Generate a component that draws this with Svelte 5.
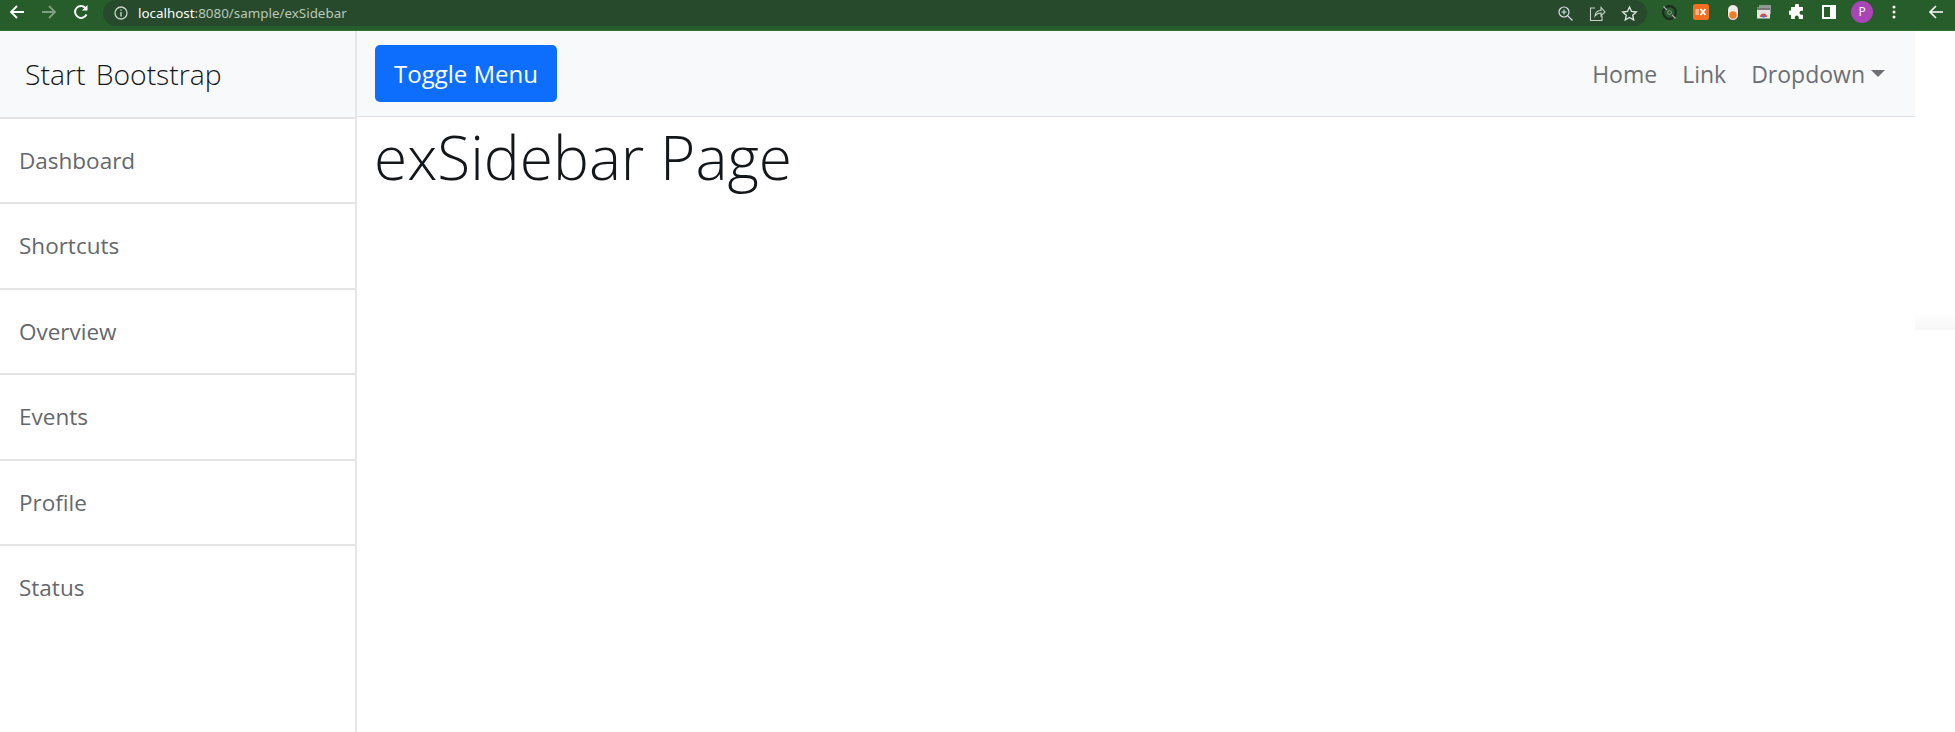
<script>
  const items = ['Dashboard', 'Shortcuts', 'Overview', 'Events', 'Profile', 'Status'];
</script>

<div class="window">
  <header class="chrome">
    <div class="nav-buttons">
      <svg width="18" height="18" viewBox="0 0 18 18" class="ic"><path d="M16 9H3M9 3 3 9l6 6" fill="none" stroke="#fff" stroke-width="1.8"/></svg>
      <svg width="18" height="18" viewBox="0 0 18 18" class="ic"><path d="M2 9h13M9 3l6 6-6 6" fill="none" stroke="#7f9f80" stroke-width="1.8"/></svg>
      <svg width="18" height="18" viewBox="0 0 18 18" class="ic"><path d="M14.5 11.5A6 6 0 1 1 14 5.5" fill="none" stroke="#fff" stroke-width="1.9"/><path d="M15.5 2v5.5H10z" fill="#fff"/></svg>
    </div>
    <div class="omnibox">
      <svg width="16" height="16" viewBox="0 0 16 16"><circle cx="8" cy="8" r="6" fill="none" stroke="#c9d3ca" stroke-width="1.3"/><path d="M8 7v4.500M8 4.500v1.300" stroke="#c9d3ca" stroke-width="1.4"/></svg>
      <span class="url"><span class="host">localhost</span>:8080/sample/exSidebar</span>
      <div class="omni-icons">
        <svg width="17" height="17" viewBox="0 0 17 17"><circle cx="7" cy="7" r="5" fill="none" stroke="#dde" stroke-width="1.200"/><path d="M7 4.500v5M4.500 7h5M10.800 10.800l4.700 4.700" stroke="#dde" stroke-width="1.200" fill="none"/></svg>
        <svg width="17" height="17" viewBox="0 0 17 17"><path d="M6 3H1.500v12.500h11.500V11M6 11c.5-4 3-5.500 6-5.500V2.500l4 4.500-4 4V8c-2.500 0-4.500 1-6 3z" fill="none" stroke="#c9d3ca" stroke-width="1.100"/></svg>
        <svg width="17" height="17" viewBox="0 0 17 17"><path d="M8.500 2l2 4.500 4.800.5-3.600 3.200 1 4.800-4.200-2.500L4.300 15l1-4.800L1.700 7l4.800-.5z" fill="none" stroke="#e4e8e4" stroke-width="1.300"/></svg>
      </div>
    </div>
    <div class="extensions">
      <svg class="e1" width="17" height="17" viewBox="0 0 17 17"><circle cx="8.500" cy="8.500" r="6.300" fill="none" stroke="#1e2a21" stroke-width="2.200"/><circle cx="8.500" cy="8.500" r="1.900" fill="none" stroke="#8d9f90" stroke-width="1"/><path d="M2.500 2.500 6 6M14.500 14.500 11 11" stroke="#a9b6ab" stroke-width="1.100"/></svg>
      <svg class="e2" width="16" height="16" viewBox="0 0 16 16"><rect width="16" height="16" rx="2.500" fill="#f26f21"/><rect x="2.500" y="5" width="3.500" height="6" fill="#f8b48b"/><path d="m7.500 5 5 6m0-6-5 6" stroke="#fff" stroke-width="1.900"/></svg>
      <svg class="e3" width="12" height="17" viewBox="0 0 12 17"><rect x=".5" y=".5" width="11" height="16" rx="5.500" fill="#f0ece8" stroke="#333d34" stroke-width="1"/><circle cx="6" cy="11" r="3.700" fill="#f47b20"/></svg>
      <svg class="e4" width="16" height="16" viewBox="0 0 16 16"><rect x="3" y="1" width="12" height="9" fill="#8a9a8c"/><rect x="1" y="3.500" width="13" height="11" fill="#e4e4e4"/><rect x="1" y="3.500" width="13" height="2.500" fill="#777"/><path d="M4 13a3.300 3.300 0 0 1 7 0z" fill="#dd4b3e"/><circle cx="7.500" cy="12.500" r="1.300" fill="#3b78e7"/></svg>
      <svg class="e5" width="16" height="16" viewBox="0 0 16 16"><path d="M6 1.500a2 2 0 0 1 4 0V3h4v3.700h-1.500a2 2 0 0 0 0 4H14V15H9.800v-1.500a2 2 0 0 0-4 0V15H2v-4h-.5a2.300 2.300 0 0 1 0-4.600H2V3h4z" fill="#fff"/></svg>
      <svg class="e6" width="14" height="14" viewBox="0 0 14 14"><path fill-rule="evenodd" d="M0 0h14v14H0zM2 2v10h6V2z" fill="#fff"/></svg>
      <span class="avatar">P</span>
      <svg class="e7" width="4" height="14" viewBox="0 0 4 14"><circle cx="2" cy="2" r="1.500" fill="#fff"/><circle cx="2" cy="7" r="1.500" fill="#fff"/><circle cx="2" cy="12" r="1.500" fill="#fff"/></svg>
      <svg class="e8" width="16" height="16" viewBox="0 0 16 16"><path d="M15 8H2M8 2 2 8l6 6" fill="none" stroke="#fff" stroke-width="1.600"/></svg>
    </div>
  </header>

  <div class="page">
    <aside class="sidebar">
      <div class="heading">Start Bootstrap</div>
      <div class="list">
        {#each items as item}
          <a class="item" href="#top">{item}</a>
        {/each}
      </div>
    </aside>
    <main class="content">
      <nav class="navbar">
        <button class="toggle">Toggle Menu</button>
        <ul class="links">
          <li>Home</li>
          <li>Link</li>
          <li class="dropdown">Dropdown<span class="caret"></span></li>
        </ul>
      </nav>
      <h1>exSidebar Page</h1>
    </main>
    <div class="strip">
      <div class="shade"></div>
    </div>
  </div>
</div>

<style>
  :global(body) {
    margin: 0;
    background: #fff;
    overflow: hidden;
  }
  .window {
    width: 1955px;
    height: 732px;
    display: flex;
    flex-direction: column;
    font-family: "Open Sans", "Noto Sans", sans-serif;
    overflow: hidden;
  }
  .chrome {
    height: 31px;
    flex: none;
    box-sizing: border-box;
    background: #275d2a;
    border-bottom: 1px solid #2f7434;
    display: flex;
    align-items: flex-start;
    padding-left: 8px;
  }
  .nav-buttons {
    display: flex;
    gap: 14px;
    padding-top: 3px;
    width: 95px;
    flex: none;
  }
  .ic { display: block; }
  .omnibox {
    width: 1544px;
    height: 26px;
    box-sizing: border-box;
    flex: none;
    background: #264a2b;
    border-radius: 13px;
    display: flex;
    align-items: center;
    padding-left: 10px;
    gap: 9px;
    color: #b9c8ba;
    font-size: 13.400px;
    font-family: "Noto Sans", sans-serif;
  }
  .url { white-space: nowrap; }
  .host { color: #fff; }
  .omni-icons {
    margin-left: auto;
    display: flex;
    gap: 15px;
    padding-right: 9px;
  }
  .extensions {
    position: relative;
    flex: 1;
    height: 26px;
  }
  .extensions svg, .avatar { position: absolute; }
  .e1 { left: 14px; top: 4px; }
  .e2 { left: 46px; top: 4px; }
  .e3 { left: 80px; top: 4px; }
  .e4 { left: 109px; top: 4px; }
  .e5 { left: 142px; top: 4px; }
  .e6 { left: 175px; top: 5px; }
  .avatar {
    left: 204px;
    top: 1px;
    width: 22px;
    height: 22px;
    border-radius: 50%;
    background: #a945b5;
    color: #fff;
    font-size: 12px;
    line-height: 22px;
    text-align: center;
  }
  .e7 { left: 245px; top: 5px; }
  .e8 { left: 281px; top: 4px; }

  .page {
    flex: 1;
    display: flex;
    min-height: 0;
  }
  .sidebar {
    width: 357px;
    flex: none;
    box-sizing: border-box;
    border-right: 2px solid #e3e6ea;
  }
  .heading {
    height: 85.750px;
    box-sizing: border-box;
    background: #f8f9fa;
    padding-left: 25px;
    font-size: 28.300px;
    line-height: 86px;
    color: #14171a;
    font-weight: 300;
    word-spacing: 3px;
  }
  .list {
    display: flex;
    flex-direction: column;
  }
  .item {
    display: block;
    height: 85.500px;
    box-sizing: border-box;
    padding-left: 19px;
    border-top: 2px solid #e4e4e4;
    line-height: 84px;
    font-size: 22.500px;
    color: #64686d;
    text-decoration: none;
  }
  .content {
    width: 1558px;
    flex: none;
  }
  .navbar {
    height: 86px;
    box-sizing: border-box;
    background: #f8f9fa;
    border-bottom: 1px solid #dee2e6;
    display: flex;
    align-items: center;
    justify-content: space-between;
    padding: 0 30px 0 18px;
  }
  .toggle {
    width: 182px;
    height: 57px;
    border: none;
    border-radius: 5px;
    background: #0d6efd;
    color: #fff;
    font: inherit;
    font-size: 24px;
  }
  .links {
    list-style: none;
    margin: 0;
    padding: 0;
    display: flex;
    gap: 25px;
    font-size: 23px;
    color: #6c7075;
  }
  .dropdown { display: flex; align-items: center; }
  .caret {
    margin-left: 6px;
    border-top: 7px solid #6c7075;
    border-left: 7px solid transparent;
    border-right: 7px solid transparent;
  }
  h1 {
    margin: 0;
    padding: 0 0 0 17px;
    font-size: 60.400px;
    font-weight: 300;
    line-height: 80px;
    color: #14171a;
  }
  .strip {
    flex: 1;
    padding-top: 282px;
  }
  .shade {
    height: 17px;
    background: linear-gradient(#fff, #f7f7f7);
  }
</style>
